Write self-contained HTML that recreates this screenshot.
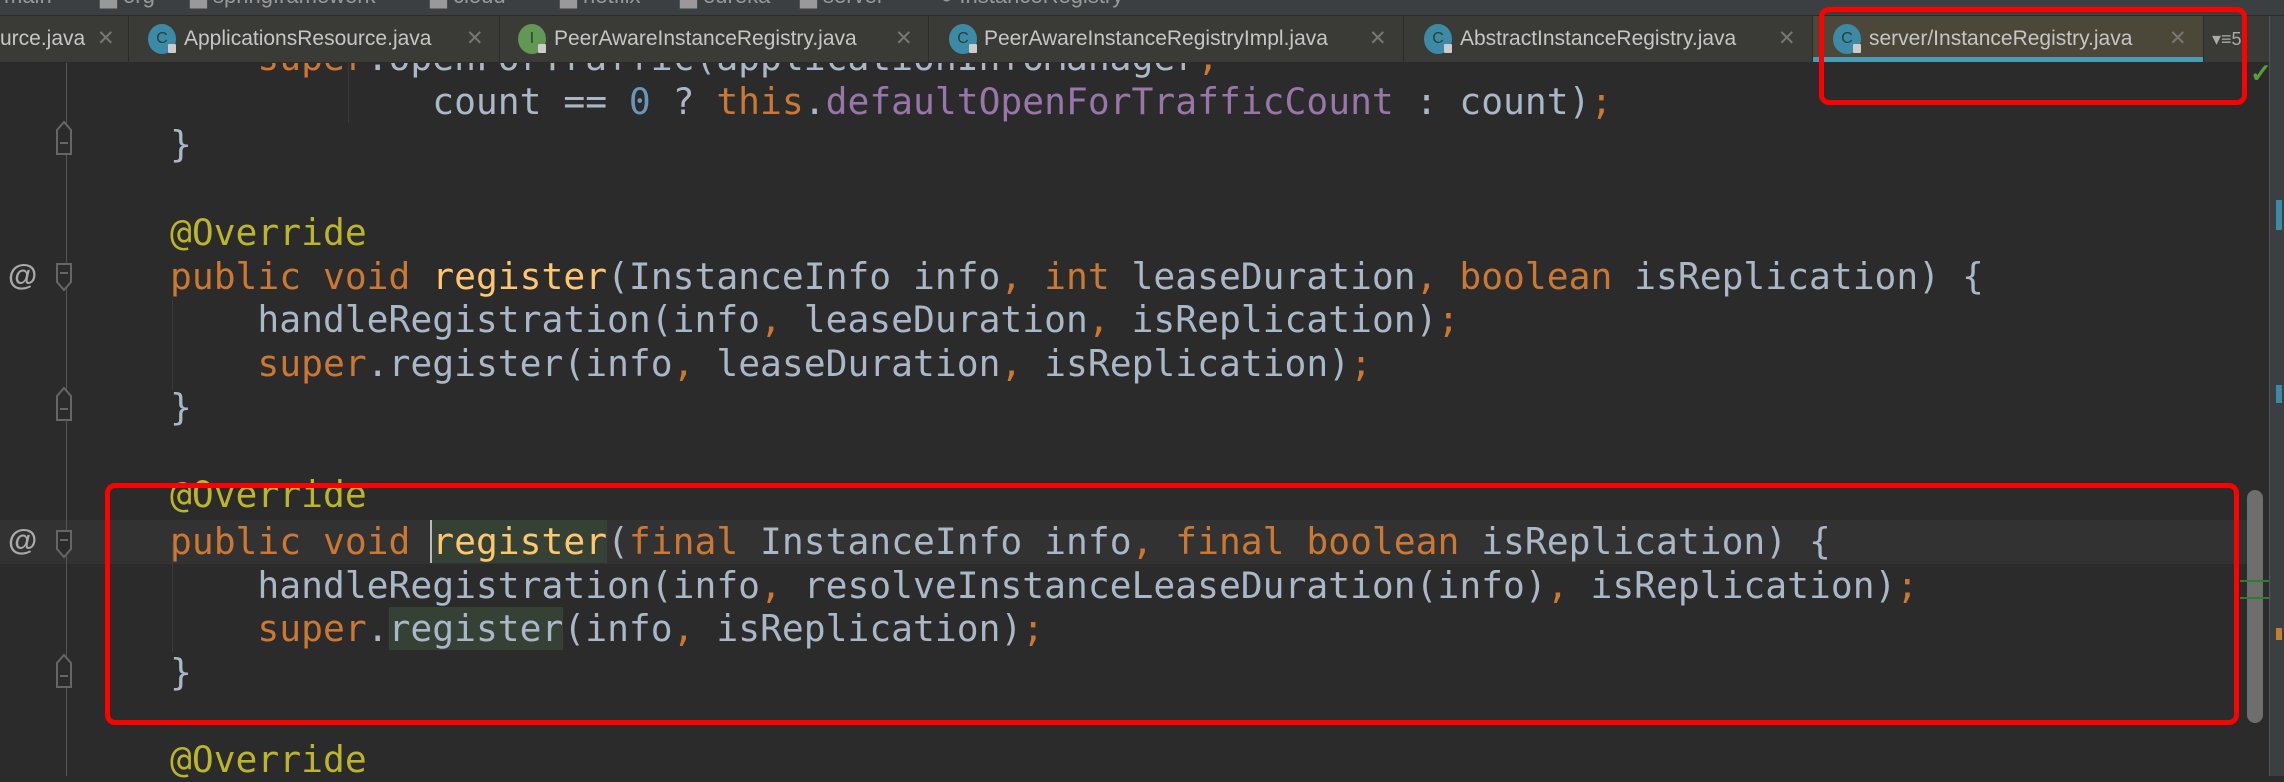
<!DOCTYPE html>
<html><head><meta charset="utf-8"><style>
*{margin:0;padding:0;box-sizing:border-box}
body{width:2284px;height:776px;overflow:hidden;background:#2b2b2b;position:relative;font-family:"Liberation Sans",sans-serif}
.crumb{position:absolute;left:0;top:0;width:2284px;height:16px;background:#3c3f41;border-bottom:1px solid #2b2b2b;overflow:hidden}
.crumb span{position:absolute;top:-17px;color:#999;font-size:22px}
.tabs{position:absolute;left:0;top:16px;width:2270px;height:47px;background:#3a3a36;border-bottom:1px solid #2b2b2b}
.tab{position:absolute;top:0;height:46px;border-right:1px solid #2b2b2b;color:#c6c6c6;font-size:21px;line-height:46px;white-space:nowrap;overflow:hidden}
.ic{position:absolute;top:8px;width:28px;height:30px;border-radius:50%;background:#3d8aa6;color:#243;font-size:16px;line-height:30px;text-align:center}
.ic.g{background:#629755}
.ic:after{content:"";position:absolute;left:20px;top:20px;width:8px;height:9px;background:#ccc;border-radius:1px}
.x{color:#777;position:absolute}
.code{position:absolute;left:170px;top:0;font-family:"DejaVu Sans Mono","Liberation Mono",monospace;font-size:36.3px;color:#a9b7c6;white-space:pre}
.l{position:absolute;left:0;height:44px;line-height:44px}
.k{color:#cc7832}.a{color:#bbb529}.n{color:#6897bb}.f{color:#9876aa}.m{color:#ffc66d}
.hl{background:#344134}
.red{position:absolute;border:5px solid #ff0000;border-radius:10px}
</style></head><body>
<div style="position:absolute;left:0;top:520px;width:2247px;height:44px;background:#323232"></div>
<div style="position:absolute;left:66px;top:63px;width:1px;height:713px;background:#555"></div>
<div style="position:absolute;left:172px;top:542px;width:1px;height:110px;background:#3b3b3b"></div>
<div style="position:absolute;left:172px;top:300px;width:1px;height:90px;background:#3b3b3b"></div>
<div style="position:absolute;left:348px;top:63px;width:1px;height:60px;background:#3b3b3b"></div>
<div style="position:absolute;left:8px;top:259px;color:#aaa;font-size:30px;font-weight:bold">@</div>
<div style="position:absolute;left:8px;top:524px;color:#aaa;font-size:30px;font-weight:bold">@</div>
<svg style="position:absolute;left:0;top:0" width="100" height="776">
<g fill="#2b2b2b" stroke="#666" stroke-width="2">
<path d="M57 130 L57 154 L71 154 L71 130 L64 122 Z"/>
<path d="M57 264 L57 282 L64 290 L71 282 L71 264 Z"/>
<path d="M57 396 L57 420 L71 420 L71 396 L64 388 Z"/>
<path d="M57 531 L57 549 L64 557 L71 549 L71 531 Z"/>
<path d="M57 663 L57 687 L71 687 L71 663 L64 655 Z"/>
</g>
<g stroke="#666" stroke-width="2"><path d="M60 143h8M60 273h8M60 409h8M60 540h8M60 676h8"/></g>
</svg>
<div class="code">
<div class="l" style="top:36px">    <span class="k">super</span>.openForTraffic(applicationInfoManager<span class="k">,</span></div>
<div class="l" style="top:80px">            count == <span class="n">0</span> ? <span class="k">this</span>.<span class="f">defaultOpenForTrafficCount</span> : count)<span class="k">;</span></div>
<div class="l" style="top:123px">}</div>
<div class="l" style="top:211px"><span class="a">@Override</span></div>
<div class="l" style="top:255px"><span class="k">public void </span><span class="m">register</span>(InstanceInfo info<span class="k">, int </span>leaseDuration<span class="k">, boolean </span>isReplication) {</div>
<div class="l" style="top:298px">    handleRegistration(info<span class="k">, </span>leaseDuration<span class="k">, </span>isReplication)<span class="k">;</span></div>
<div class="l" style="top:342px">    <span class="k">super</span>.register(info<span class="k">, </span>leaseDuration<span class="k">, </span>isReplication)<span class="k">;</span></div>
<div class="l" style="top:386px">}</div>
<div class="l" style="top:473px"><span class="a">@Override</span></div>
<div class="l" style="top:520px"><span class="k">public void </span><span class="m hl" style="box-shadow:-2px 0 0 #bbb">register</span>(<span class="k">final </span>InstanceInfo info<span class="k">, final boolean </span>isReplication) {</div>
<div class="l" style="top:564px">    handleRegistration(info<span class="k">, </span>resolveInstanceLeaseDuration(info)<span class="k">, </span>isReplication)<span class="k">;</span></div>
<div class="l" style="top:607px">    <span class="k">super</span>.<span class="hl">register</span>(info<span class="k">, </span>isReplication)<span class="k">;</span></div>
<div class="l" style="top:651px">}</div>
<div class="l" style="top:738px"><span class="a">@Override</span></div>
</div>
<div class="crumb">
<span style="left:4px">main</span><span style="left:100px">▇ org</span><span style="left:190px">▇ springframework</span><span style="left:430px">▇ cloud</span><span style="left:560px">▇ netflix</span><span style="left:680px">▇ eureka</span><span style="left:800px">▇ server</span><span style="left:940px">● InstanceRegistry</span>
</div>
<div class="tabs">
<div class="tab" style="left:0;width:129px"><span style="position:absolute;left:0">urce.java</span><span class="x" style="left:97px">✕</span></div>
<div class="tab" style="left:129px;width:371px"><div class="ic" style="left:19px">C</div><span style="position:absolute;left:55px">ApplicationsResource.java</span><span class="x" style="left:337px">✕</span></div>
<div class="tab" style="left:500px;width:429px"><div class="ic g" style="left:18px">I</div><span style="position:absolute;left:54px">PeerAwareInstanceRegistry.java</span><span class="x" style="left:395px">✕</span></div>
<div class="tab" style="left:929px;width:475px"><div class="ic" style="left:20px">C</div><span style="position:absolute;left:55px">PeerAwareInstanceRegistryImpl.java</span><span class="x" style="left:440px">✕</span></div>
<div class="tab" style="left:1404px;width:409px"><div class="ic" style="left:20px">C</div><span style="position:absolute;left:56px">AbstractInstanceRegistry.java</span><span class="x" style="left:374px">✕</span></div>
<div class="tab" style="left:1813px;width:391px;background:#4b4739"><div class="ic" style="left:20px">C</div><span style="position:absolute;left:56px">server/InstanceRegistry.java</span><span class="x" style="left:356px">✕</span><div style="position:absolute;left:0;bottom:0;width:391px;height:5px;background:#4a9bb5"></div></div>
<div style="position:absolute;left:2212px;top:0;color:#aaa;font-size:18px;line-height:46px">▾≡5</div>
</div>
<div style="position:absolute;left:2250px;top:58px;color:#5a9e3a;font-size:26px;font-weight:bold">✓</div>
<div style="position:absolute;left:2247px;top:490px;width:16px;height:233px;border-radius:8px;background:#6e6e6e"></div>
<div style="position:absolute;left:2240px;top:580px;width:29px;height:2px;background:#2f7d32"></div>
<div style="position:absolute;left:2240px;top:597px;width:29px;height:2px;background:#2f7d32"></div>
<div style="position:absolute;left:2269px;top:16px;width:1px;height:760px;background:#555"></div>
<div style="position:absolute;left:2270px;top:16px;width:14px;height:760px;background:#3c3f41"></div>
<div style="position:absolute;left:2276px;top:200px;width:6px;height:30px;background:#3d8aa6"></div>
<div style="position:absolute;left:2276px;top:385px;width:6px;height:18px;background:#3d8aa6"></div>
<div style="position:absolute;left:2276px;top:628px;width:6px;height:12px;background:#c08030"></div>
<div class="red" style="left:1819px;top:7px;width:428px;height:98px"></div>
<div class="red" style="left:105px;top:483px;width:2134px;height:242px"></div>
</body></html>
